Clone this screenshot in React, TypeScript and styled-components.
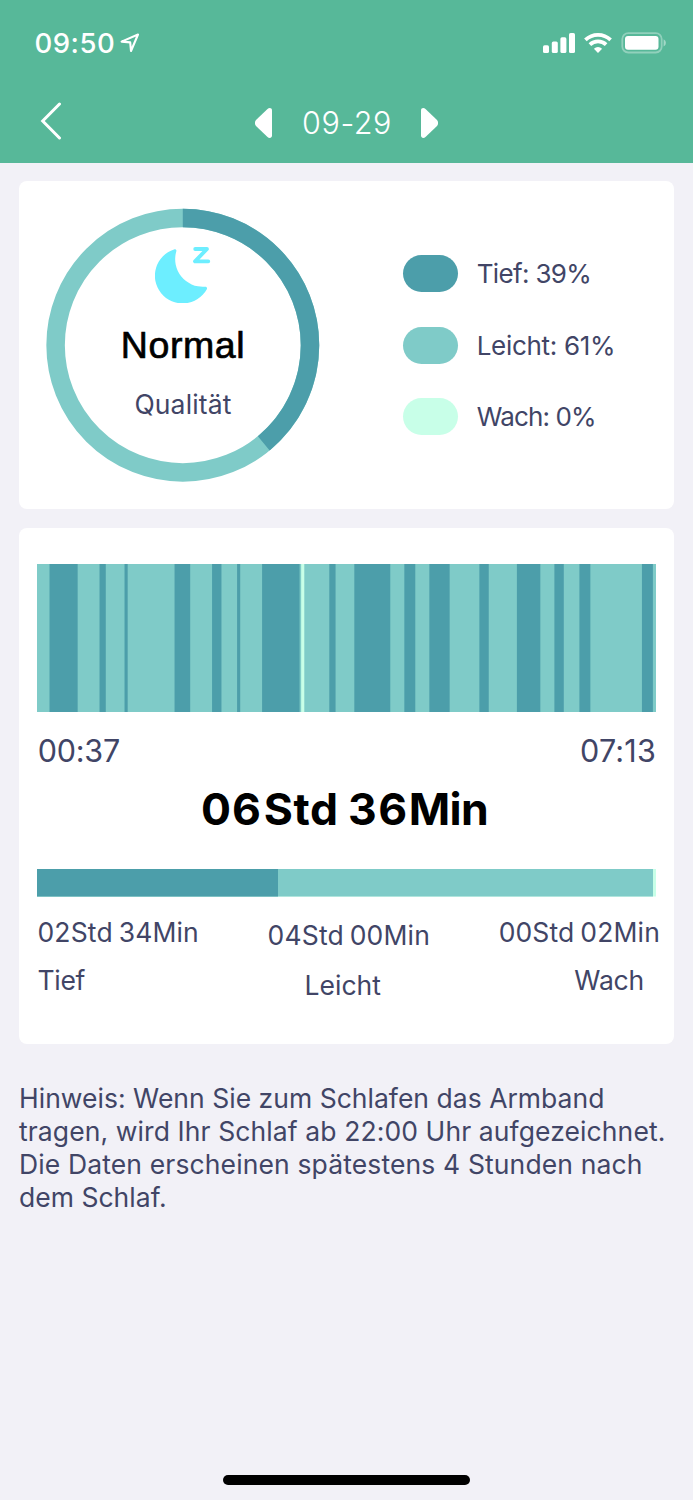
import React from "react";
import styled, { createGlobalStyle } from "styled-components";

const color = {
  header: "#57b899",
  page: "#f2f1f7",
  card: "#ffffff",
  text: "#414566",
  deep: "#4c9eaa",
  light: "#7fcbc8",
  awake: "#c8ffe8",
  moon: "#6deeff",
};

const GlobalStyle = createGlobalStyle`
  body { margin: 0; background: ${color.page}; }
  * { box-sizing: border-box; }
`;

const Screen = styled.div`
  display: flex;
  flex-direction: column;
  width: 693px;
  height: 1500px;
  background: ${color.page};
  color: ${color.text};
  font-family: Inter, "Liberation Sans", sans-serif;
  font-size: 26.5px;
  white-space: nowrap;
  overflow: hidden;
`;

const Header = styled.header`
  display: flex;
  flex-direction: column;
  height: 163px;
  background: ${color.header};
  color: #fff;
`;

const StatusBar = styled.div`
  display: flex;
  align-items: center;
  justify-content: space-between;
  height: 85px;
  padding: 0 26px 0 34.5px;
`;

const Clock = styled.div`
  display: flex;
  align-items: center;
  gap: 4.5px;
  font-size: 27.5px;
  font-weight: 500;
  letter-spacing: 0.5px;
`;

const NavBar = styled.nav`
  display: grid;
  grid-template-columns: 1fr auto 1fr;
  align-items: center;
  height: 75px;
  padding: 0 40px;
`;

const DateSwitch = styled.div`
  display: flex;
  align-items: center;
  gap: 29px;
`;

const DateLabel = styled.span`
  width: 91px;
  padding-left: 1px;
  text-align: center;
  font-size: 30.5px;
  font-weight: 300;
  letter-spacing: 0.6px;
`;

const IconButton = styled.button`
  display: flex;
  padding: 0;
  border: 0;
  background: none;
  color: inherit;
`;

const BackButton = styled(IconButton)`
  margin-bottom: 3px;
`;

const Content = styled.main`
  display: flex;
  flex-direction: column;
  gap: 19px;
  padding: 18px 19px 0;
`;

const Card = styled.section`
  border-radius: 8px;
  background: ${color.card};
`;

const QualityCard = styled(Card)`
  display: flex;
  align-items: center;
  height: 328px;
  padding-left: 27px;
`;

const Ring = styled.div`
  display: grid;
  width: 274px;
  height: 274px;
  & > * { grid-area: 1 / 1; }
`;

const RingCenter = styled.div`
  display: flex;
  flex-direction: column;
  align-items: center;
  padding-top: 38.5px;
`;

const Rating = styled.strong`
  margin-top: 22.5px;
  font: 400 37.5px/40px "Liberation Sans", sans-serif;
  letter-spacing: 0.6px;
  color: #000;
  -webkit-text-stroke: 0.7px #000;
`;

const RatingCaption = styled.span`
  margin-top: 23px;
  line-height: 32px;
  letter-spacing: 0.15px;
`;

const Legend = styled.ul`
  display: flex;
  flex-direction: column;
  gap: 34.7px;
  margin: 0 0 0 82.7px;
  padding: 0;
  list-style: none;
`;

const LegendItem = styled.li<{ $spacing: number }>`
  display: flex;
  align-items: center;
  gap: 18.5px;
  height: 37px;
  font-size: 26px;
  letter-spacing: ${(p) => p.$spacing}px;
`;

const Swatch = styled.i<{ $color: string }>`
  width: 55.5px;
  height: 37px;
  border-radius: 19px;
  background: ${(p) => p.$color};
`;

const TimelineCard = styled(Card)`
  display: flex;
  flex-direction: column;
  height: 516px;
  padding: 36px 18px 0;
`;

const Chart = styled.svg`
  display: block;
  flex: none;
`;

const TimeRange = styled.div`
  display: flex;
  justify-content: space-between;
  margin-top: 19px;
  padding-left: 0.7px;
  font-size: 30.5px;
  line-height: 40px;
`;

const Time = styled.span<{ $spacing: number }>`
  letter-spacing: ${(p) => p.$spacing}px;
`;

const Total = styled.div`
  display: flex;
  justify-content: center;
  margin: 12px 0 0 -4px;
  color: #000;
  font-size: 44.5px;
  font-weight: 700;
  line-height: 52px;
`;

const TotalPart = styled.span<{ $spacing: number; $after?: number }>`
  letter-spacing: ${(p) => p.$spacing}px;
  margin-right: ${(p) => p.$after ?? 0}px;
`;

const ShareBar = styled.div`
  margin-top: 33.5px;
  height: 28px;
`;

const Phases = styled.div`
  display: flex;
  justify-content: space-between;
  margin: 19px -4px 0 0.5px;
`;

const Phase = styled.div<{ $align: string; $drop?: boolean }>`
  display: flex;
  flex-direction: column;
  align-items: ${(p) => p.$align};
  gap: ${(p) => (p.$drop ? 18.5 : 16)}px;
  padding-top: ${(p) => (p.$drop ? 3 : 0)}px;
  line-height: 32px;
`;

const PhaseTime = styled.span`
  letter-spacing: 0.15px;
  word-spacing: -1.7px;
`;

const PhaseName = styled.span<{ $spacing?: number; $shift?: number }>`
  letter-spacing: ${(p) => p.$spacing ?? 0}px;
  margin-right: ${(p) => p.$shift ?? 0}px;
`;

const Hint = styled.p`
  margin: 19px 0 0;
  line-height: 33px;
`;

const HintLine = styled.span<{ $spacing: number }>`
  display: block;
  letter-spacing: ${(p) => p.$spacing}px;
`;

const HomeIndicator = styled.div`
  width: 247.5px;
  height: 10px;
  margin: auto auto 15px;
  border-radius: 5px;
  background: #000;
`;

const SLEEP_MINUTES = 396;

const deepPhases: [number, number][] = [
  [8, 26], [40, 44], [56, 58], [88, 98], [112, 118], [128, 130],
  [144, 168], [187, 191], [203, 226], [235, 242], [251, 264],
  [283, 289], [307, 322], [331, 337], [347, 354], [387, 394],
];

const legend = [
  { label: "Tief: 39%", fill: color.deep, spacing: -0.65 },
  { label: "Leicht: 61%", fill: color.light, spacing: -0.3 },
  { label: "Wach: 0%", fill: color.awake, spacing: -0.85 },
];

const hint = [
  { text: "Hinweis: Wenn Sie zum Schlafen das Armband", spacing: 0.02 },
  { text: "tragen, wird Ihr Schlaf ab 22:00 Uhr aufgezeichnet.", spacing: 0.1 },
  { text: "Die Daten erscheinen spätestens 4 Stunden nach", spacing: 0.13 },
  { text: "dem Schlaf.", spacing: 0.02 },
];

const LocationIcon = () => (
  <svg width="20" height="20" viewBox="0 0 20 20" fill="none" stroke="#fff" strokeWidth="2.1" strokeLinejoin="round">
    <path d="M1.6 8.6 18 1.5 11 18 10.2 9.4Z" />
  </svg>
);

const StatusIcons = () => (
  <svg width="124" height="22" viewBox="0 0 124 22" fill="#fff">
    <rect x="0" y="13.3" width="6" height="7.7" rx="1.6" />
    <rect x="8.8" y="9.4" width="6" height="11.6" rx="1.6" />
    <rect x="17.4" y="5.3" width="6" height="15.7" rx="1.6" />
    <rect x="26" y="1" width="6" height="20" rx="1.6" />
    <g fill="none" stroke="#fff" strokeWidth="3.7">
      <path d="M42.4 7.9a18.2 18.2 0 0 1 25.2 0" />
      <path d="M46.9 12.7a11.7 11.7 0 0 1 16.2 0" />
    </g>
    <path d="M50.9 16.7a6 6 0 0 1 8.2 0L55 21Z" />
    <rect x="79.3" y="1.1" width="39.4" height="19.4" rx="6" fill="none" stroke="#fff" strokeOpacity=".35" strokeWidth="1.8" />
    <rect x="82" y="4" width="33.5" height="13.8" rx="3" />
    <path d="M120.6 7.2c3 1.4 3 5.8 0 7.2Z" opacity=".45" />
  </svg>
);

const BackIcon = () => (
  <svg width="22" height="38" viewBox="0 0 22 38" fill="none" stroke="#fff" strokeWidth="3" strokeLinecap="round">
    <path d="M19.5 2 2.7 19l16.8 17" strokeLinejoin="miter" />
  </svg>
);

const ArrowIcon = ({ next }: { next?: boolean }) => (
  <svg width="17" height="30" viewBox="0 0 17 30" fill="#fff">
    <path
      transform={next ? "matrix(-1 0 0 1 17 0)" : undefined}
      d="M17 2.4V27.6C17 30 14.3 30.6 12.5 29L1 18Q-1.2 15 1 12L12.5 1C14.3-.6 17 0 17 2.4Z"
    />
  </svg>
);

const MoonIcon = () => (
  <svg width="56" height="56" viewBox="155 247 56 56" fill={color.moon}>
    <path d="M174 249.4C175.800 248.9 176.9 250 176.2 251.7A27.6 27.6 0 0 0 204.5 286.7C206.6 286.3 207.7 287.6 206.7 289.4A27.7 27.7 0 1 1 174 249.4Z" />
    <path d="M195.200 249H207L195 261.3H208.300" fill="none" stroke={color.moon} strokeWidth="3.800" strokeLinecap="round" strokeLinejoin="round" />
  </svg>
);

const RADIUS = 127.2;
const CIRCUMFERENCE = 2 * Math.PI * RADIUS;

const RingChart = () => (
  <Chart width="274" height="274" viewBox="0 0 274 274" fill="none" strokeWidth="18.5">
    <circle cx="136.8" cy="137.2" r={RADIUS} stroke={color.light} />
    <circle
      cx="136.8"
      cy="137.2"
      r={RADIUS}
      stroke={color.deep}
      strokeDasharray={`${CIRCUMFERENCE * 0.39} ${CIRCUMFERENCE}`}
      transform="rotate(-90 136.8 137.2)"
    />
  </Chart>
);

const Timeline = () => (
  <Chart width="619" height="148" viewBox={`0 0 ${SLEEP_MINUTES} 148`} preserveAspectRatio="none">
    <rect width={SLEEP_MINUTES} height="148" fill={color.light} />
    {deepPhases.map(([from, to]) => (
      <rect key={from} x={from} width={to - from} height="148" fill={color.deep} />
    ))}
    <rect x="169" width="2" height="148" fill={color.awake} />
  </Chart>
);

export default function App() {
  return (
    <>
      <GlobalStyle />
      <Screen>
        <Header>
          <StatusBar>
            <Clock>
              09:50
              <LocationIcon />
            </Clock>
            <StatusIcons />
          </StatusBar>
          <NavBar>
            <BackButton aria-label="Zurück"><BackIcon /></BackButton>
            <DateSwitch>
              <IconButton aria-label="Vorheriger Tag"><ArrowIcon /></IconButton>
              <DateLabel>09-29</DateLabel>
              <IconButton aria-label="Nächster Tag"><ArrowIcon next /></IconButton>
            </DateSwitch>
          </NavBar>
        </Header>

        <Content>
          <QualityCard>
            <Ring>
              <RingChart />
              <RingCenter>
                <MoonIcon />
                <Rating>Normal</Rating>
                <RatingCaption>Qualität</RatingCaption>
              </RingCenter>
            </Ring>
            <Legend>
              {legend.map((item) => (
                <LegendItem key={item.label} $spacing={item.spacing}>
                  <Swatch $color={item.fill} />
                  {item.label}
                </LegendItem>
              ))}
            </Legend>
          </QualityCard>

          <TimelineCard>
            <Timeline />
            <TimeRange>
              <Time $spacing={-0.2}>00:37</Time>
              <Time $spacing={0.2}>07:13</Time>
            </TimeRange>
            <Total>
              <TotalPart $spacing={1.2} $after={1.5}>06</TotalPart>
              <TotalPart $spacing={0.6} $after={9.5}>Std</TotalPart>
              <TotalPart $spacing={1.5}>36</TotalPart>
              <TotalPart $spacing={-0.6}>Min</TotalPart>
            </Total>
            <ShareBar>
              <Chart width="619" height="28" viewBox="0 0 619 28">
                <rect width="619" height="27.500" fill={color.awake} />
                <rect width="616" height="27.500" fill={color.light} />
                <rect width="241" height="27.500" fill={color.deep} />
              </Chart>
            </ShareBar>
            <Phases>
              <Phase $align="flex-start">
                <PhaseTime>02Std 34Min</PhaseTime>
                <PhaseName $spacing={-0.3}>Tief</PhaseName>
              </Phase>
              <Phase $align="center" $drop>
                <PhaseTime>04Std 00Min</PhaseTime>
                <PhaseName $shift={12}>Leicht</PhaseName>
              </Phase>
              <Phase $align="flex-end">
                <PhaseTime>00Std 02Min</PhaseTime>
                <PhaseName $spacing={-0.2} $shift={16}>Wach</PhaseName>
              </Phase>
            </Phases>
          </TimelineCard>

          <Hint>
            {hint.map((line) => (
              <HintLine key={line.text} $spacing={line.spacing}>{line.text}</HintLine>
            ))}
          </Hint>
        </Content>

        <HomeIndicator />
      </Screen>
    </>
  );
}
